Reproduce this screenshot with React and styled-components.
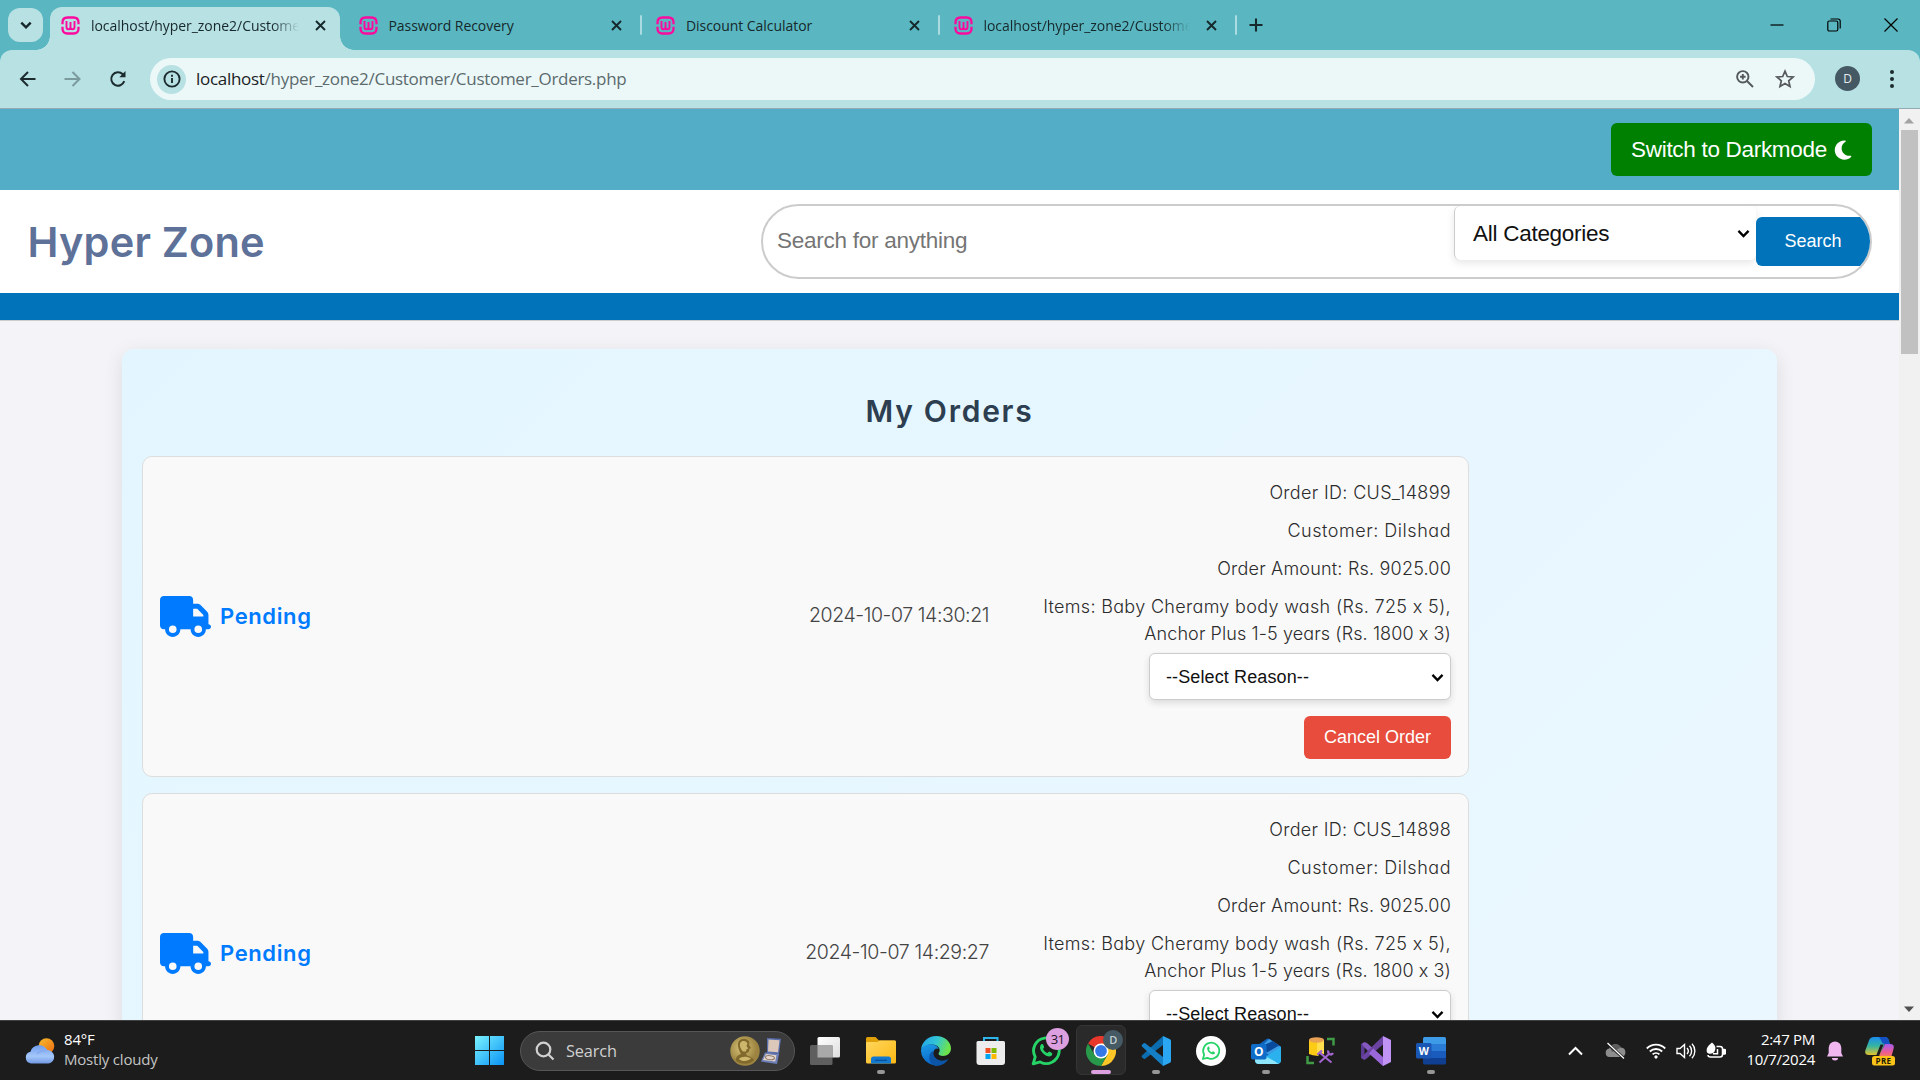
import React from "react";
import styled, { createGlobalStyle, css } from "styled-components";
import { FaMoon, FaTruck } from "react-icons/fa6";

const ui = `"Open Sans", "Noto Sans", sans-serif`;
const arial = `"Liberation Sans", Arial, sans-serif`;
const brand = `Inter, "Open Sans", sans-serif`;

const GlobalStyle = createGlobalStyle`
  *, *::before, *::after { box-sizing: border-box; }
  body { margin: 0; overflow: hidden; background: #f4f3f8; }
  svg { display: block; flex: none; }
  button { border: 0; background: none; padding: 0; font: inherit; color: inherit; display: flex; align-items: center; justify-content: center; flex: none; }
`;

const Screen = styled.div`
  width: 1920px;
  height: 1080px;
  display: flex;
  flex-direction: column;
  overflow: hidden;
`;

/* ---------- browser chrome ---------- */

const TabStrip = styled.div`
  height: 50px;
  flex: none;
  display: flex;
  align-items: stretch;
  background: #5ab7c1;
  color: #16282b;
  font-family: ${ui};
  font-size: 14px;
`;

const TabSearch = styled.button`
  width: 35px;
  height: 34px;
  margin: 8px 7px 0 8px;
  border-radius: 12px;
  background: #b8e1e4;
`;

const Tab = styled.div`
  display: flex;
  align-items: center;
  width: ${(p) => (p.$active ? 290 : 297.5)}px;
  flex: none;
  position: relative;
  padding: 0 ${(p) => (p.$active ? 14 : 18)}px 0 ${(p) => (p.$active ? 11 : 16)}px;
  ${(p) =>
    p.$active &&
    css`
      margin: 7px 2.5px 0 0;
      padding-bottom: 7px;
      background: #b8e1e4;
      border-radius: 12px 12px 0 0;
      &::before, &::after {
        content: "";
        position: absolute;
        bottom: 0;
        width: 14px;
        height: 14px;
      }
      &::before { left: -14px; background: radial-gradient(circle at 0 0, transparent 13.5px, #b8e1e4 14px); }
      &::after { right: -14px; background: radial-gradient(circle at 100% 0, transparent 13.5px, #b8e1e4 14px); }
    `}
  ${(p) =>
    p.$divided &&
    css`
      &::after {
        content: "";
        position: absolute;
        right: -2px;
        top: 15px;
        width: 2px;
        height: 20px;
        border-radius: 1px;
        background: #a9dbe0;
      }
    `}
`;

const TabTitle = styled.span`
  flex: 1;
  min-width: 0;
  margin: 0 16px 0 11px;
  overflow: hidden;
  white-space: nowrap;
  letter-spacing: -0.05px;
  ${(p) => p.$fade && css`mask-image: linear-gradient(90deg, #000 87%, transparent 100%);`}
`;

const NewTab = styled.button`
  width: 42px;
`;

const WindowControls = styled.div`
  display: flex;
  align-items: center;
  margin-left: auto;
  padding-right: 22px;
  gap: 43px;
`;

const ToolbarBack = styled.div`
  flex: none;
  background: #5ab7c1;
`;

const Toolbar = styled.div`
  height: 59px;
  display: flex;
  align-items: center;
  background: #b8e1e4;
  border-radius: 12px 12px 0 0;
  border-bottom: 1px solid #92aab0;
  color: #1c2b2e;
`;

const NavButtons = styled.div`
  display: flex;
  width: 150px;
  padding-left: 18px;
  gap: 25px;
`;

const Omnibox = styled.div`
  flex: none;
  width: 1665px;
  height: 42px;
  border-radius: 21px;
  background: #ecf8f8;
  display: flex;
  align-items: center;
  padding: 0 20px 0 7px;
`;

const SiteInfo = styled.div`
  width: 29px;
  height: 29px;
  border-radius: 50%;
  background: #b8e1e4;
  display: grid;
  place-items: center;
`;

const Url = styled.span`
  flex: 1;
  margin: -1px 0 0 10px;
  font-family: ${ui};
  font-size: 17px;
  letter-spacing: -0.29px;
  color: #5b6a6d;
  b { font-weight: 400; color: #1b2224; }
`;

const OmniActions = styled.div`
  display: flex;
  align-items: center;
  gap: 20px;
  color: #55595b;
`;

const Avatar = styled.div`
  width: 25px;
  height: 25px;
  flex: none;
  margin: -2px 30px 0 20px;
  border-radius: 50%;
  background: #455964;
  color: #e6edf0;
  font: 12px ${ui};
  display: grid;
  place-items: center;
`;

/* ---------- page ---------- */

const Viewport = styled.div`
  height: 911px;
  flex: none;
  display: flex;
  overflow: hidden;
`;

const Page = styled.main`
  width: 1899px;
  flex: none;
  overflow: hidden;
  background: #f4f3f8;
`;

const ScrollTrack = styled.div`
  width: 21px;
  flex: none;
  display: flex;
  flex-direction: column;
  align-items: center;
  background: #f1f1f1;
  padding: 9px 1px 8px 0;
`;

const ScrollThumb = styled.div`
  width: 17px;
  height: 224px;
  margin: 6px 0 auto;
  background: #c1c1c1;
`;

const TopBar = styled.div`
  height: 81px;
  display: flex;
  align-items: center;
  justify-content: flex-end;
  padding-right: 27px;
  background: #53adc6;
`;

const DarkModeButton = styled.button`
  width: 261px;
  height: 53px;
  padding-left: 2px;
  border-radius: 6px;
  background: #008000;
  color: #fff;
  font-family: ${arial};
  font-size: 22.5px;
  letter-spacing: -0.3px;
  gap: 5px;
`;

const Header = styled.header`
  height: 103px;
  display: flex;
  align-items: center;
  justify-content: space-between;
  padding: 0 27px 0 27.5px;
  background: #fff;
`;

const Logo = styled.h1`
  margin: 0;
  font-family: ${brand};
  font-feature-settings: "cv11", "calt" 0;
  font-size: 41.5px;
  font-weight: 600;
  letter-spacing: 0.2px;
  color: #5d7199;
`;

const SearchBar = styled.div`
  width: 1111px;
  height: 75px;
  display: flex;
  align-items: center;
  border: 2px solid #ccc;
  border-radius: 37.5px;
  overflow: hidden;
`;

const Placeholder = styled.span`
  flex: 1;
  padding: 0 0 2px 14px;
  font-family: ${arial};
  font-size: 22.5px;
  letter-spacing: -0.25px;
  color: #757575;
`;

const CategorySelect = styled.div`
  align-self: flex-start;
  width: 302px;
  height: 54px;
  display: flex;
  align-items: center;
  justify-content: space-between;
  padding: 1px 5px 0 18px;
  border-left: 1px solid #ccc;
  border-radius: 6px;
  box-shadow: 0 3px 8px rgba(0, 0, 0, 0.1);
  font-family: ${arial};
  font-size: 22.5px;
  letter-spacing: -0.27px;
  color: #111;
`;

const SearchButton = styled.button`
  width: 114px;
  height: 49px;
  border-radius: 6px 0 0 6px;
  background: #0073bb;
  color: #fff;
  font-family: ${arial};
  font-size: 18px;
`;

const NavBand = styled.div`
  height: 28px;
  background: #0073bb;
  border-bottom: 1px solid #ccc;
`;

const OrdersPanel = styled.section`
  width: 1655px;
  height: 2400px;
  margin: 28px 0 0 122px;
  padding: 39px 20px;
  border-radius: 12px;
  background: linear-gradient(135deg, #e3f6ff, #f0f8ff);
  box-shadow: 0 5px 19px rgba(0, 0, 0, 0.1);
`;

const PanelTitle = styled.h2`
  margin: 0 0 22px;
  line-height: 46px;
  text-align: center;
  font-family: ${brand};
  font-feature-settings: "cv11", "calt" 0;
  font-size: 30px;
  font-weight: 600;
  letter-spacing: 1.75px;
  color: #2c3e50;
`;

const OrderCard = styled.article`
  width: 1327px;
  height: 321px;
  margin-bottom: 16px;
  padding: 17px;
  display: flex;
  align-items: center;
  border: 1px solid #ddd;
  border-radius: 10px;
  background: #f9f9f9;
  font-family: ${brand};
  font-feature-settings: "cv11", "calt" 0;
`;

const Status = styled.div`
  display: flex;
  align-items: center;
  gap: 9px;
  padding-bottom: 1px;
  color: #007bff;
  font-size: 22px;
  font-weight: 600;
  letter-spacing: 0.62px;
`;

const OrderDate = styled.time`
  flex: 1;
  padding-bottom: 3px;
  text-align: right;
  font-size: 19.5px;
  font-weight: 300;
  letter-spacing: ${(p) => p.$tracking}px;
  color: #444;
`;

const Details = styled.div`
  width: 462px;
  padding-top: 4.5px;
  display: flex;
  flex-direction: column;
  align-items: flex-end;
`;

const DetailLine = styled.div`
  line-height: 27px;
  margin-bottom: ${(p) => (p.$tight ? 0 : p.$last ? 6.5 : 11)}px;
  font-size: 18px;
  font-weight: 350;
  letter-spacing: ${(p) => p.$tracking}px;
  color: #2c2c2c;
  white-space: nowrap;
`;

const ReasonSelect = styled.div`
  width: 302px;
  height: 47px;
  display: flex;
  align-items: center;
  justify-content: space-between;
  padding: 1px 5px 0 16px;
  border: 1px solid #ccc;
  border-radius: 6px;
  background: #fff;
  box-shadow: 0 3px 7px rgba(0, 0, 0, 0.12);
  font-family: ${arial};
  font-size: 18px;
  letter-spacing: 0.12px;
  color: #111;
`;

const CancelButton = styled.button`
  width: 147px;
  height: 43px;
  margin-top: 16px;
  border-radius: 6px;
  background: #e74c3c;
  color: #fff;
  font-family: ${arial};
  font-size: 18px;
`;

/* ---------- taskbar ---------- */

const Taskbar = styled.footer`
  height: 60px;
  flex: none;
  display: flex;
  align-items: center;
  background: #1c1c1c;
  border-top: 1px solid #414141;
  color: #fff;
  font-family: ${ui};
  font-size: 15px;
`;

const Weather = styled.div`
  display: flex;
  align-items: center;
  width: 459px;
  padding-left: 24px;
  gap: 8px;
`;

const WeatherText = styled.div`
  display: flex;
  flex-direction: column;
  padding-bottom: 4px;
  line-height: 20px;
  letter-spacing: -0.2px;
  span { color: #c4c4c4; }
`;

const TaskItem = styled.div`
  width: ${(p) => p.$width || 55}px;
  height: 59px;
  flex: none;
  display: grid;
  place-items: center;
  position: relative;
  &::after {
    content: "";
    display: ${(p) => (p.$running || p.$focused ? "block" : "none")};
    position: absolute;
    bottom: 6px;
    left: 50%;
    transform: translateX(-50%);
    width: ${(p) => (p.$focused ? 20 : 8)}px;
    height: 4px;
    border-radius: 2px;
    background: ${(p) => (p.$focused ? "#dc9fe0" : "#969696")};
  }
  ${(p) =>
    p.$focused &&
    css`
      &::before {
        content: "";
        position: absolute;
        inset: 4px 2.5px 5px;
        border-radius: 6px;
        background: #2a2a2a;
        border: 1px solid #353535;
      }
    `}
  svg { position: relative; }
`;

const Badge = styled.span`
  position: absolute;
  display: grid;
  place-items: center;
  top: ${(p) => (p.$profile ? 8.5 : 7)}px;
  right: ${(p) => (p.$profile ? 5 : 4)}px;
  width: ${(p) => (p.$profile ? 20 : 23)}px;
  height: ${(p) => (p.$profile ? 20 : 22)}px;
  border-radius: 50%;
  background: ${(p) => (p.$profile ? "#455a64" : "#dc9fe0")};
  color: ${(p) => (p.$profile ? "#c3ced3" : "#221525")};
  font-size: ${(p) => (p.$profile ? 11 : 13)}px;
  font-weight: ${(p) => (p.$profile ? 600 : 400)};
  letter-spacing: -0.7px;
`;

const TaskSearch = styled.div`
  width: 275px;
  height: 40px;
  margin: 0 1px;
  flex: none;
  display: flex;
  align-items: center;
  padding: 0 11px 0 14px;
  border: 1px solid #565656;
  border-radius: 20px;
  background: #3b3b3b;
  color: #d0d0d0;
  font-size: 16.3px;
  letter-spacing: -0.1px;
  span { flex: 1; margin-left: 11px; }
`;

const Tray = styled.div`
  margin-left: auto;
  display: flex;
  align-items: center;
  padding-right: 14px;
`;

const TrayIcons = styled.div`
  display: flex;
  align-items: center;
  gap: ${(p) => p.$gap}px;
  margin-left: ${(p) => p.$before || 0}px;
  margin-right: ${(p) => p.$after || 0}px;
`;

const Clock = styled.div`
  width: 80px;
  padding-bottom: 3px;
  margin: 0 12px 0 9px;
  line-height: 20px;
  text-align: right;
  letter-spacing: -0.28px;
`;

/* ---------- icons ---------- */

const Stroke = ({ w = 18, h = w, vb = "0 0 18 18", sw = 2, children, ...rest }) => (
  <svg width={w} height={h} viewBox={vb} fill="none" stroke="currentColor" strokeWidth={sw} {...rest}>
    {children}
  </svg>
);

const Chevron = ({ size = 14, color = "#000", sw = 2.2 }) => (
  <Stroke w={size} h={size} vb="0 0 14 14" sw={sw} color={color}>
    <path d="M2.3 4.6 7 9.3l4.7-4.7" />
  </Stroke>
);

const CloseIcon = () => (
  <Stroke w={11} vb="0 0 11 11" sw={1.9}>
    <path d="M1 1l9 9M10 1 1 10" />
  </Stroke>
);

const WampIcon = () => (
  <svg width="19" height="19" viewBox="0 0 19 19" fill="none" stroke="#fb0a9e">
    <path d="M1.500 8.200V6.500q0-5 5-5h6q5 0 5 5v1.700M1.500 10.800v1.700q0 5 5 5h6q5 0 5-5v-1.700" strokeWidth="2.300" />
    <path d="M5.500 5v6q0 2.300 2 2.300t2-2.300V6M9.500 11q0 2.300 2 2.300t2-2.300V5" strokeWidth="1.900" />
  </svg>
);

const WhatsGlyph = ({ size, color, sw }) => (
  <svg width={size} height={size} viewBox="0 0 30 30">
    <path d="M2.200 27.800l2-6.900A12.800 12.800 0 1 1 9.200 25.900z" fill="none" stroke={color} strokeWidth={sw} strokeLinejoin="round" />
    <path d="M10.300 8.300c.9-.7 1.500-.4 1.800.3l1 2.300c.2.600-.8 1.500-1.100 2 .9 1.900 2.500 3.400 4.600 4.200.6-.5 1.200-1.600 1.700-1.500l2.600 1.300c.8.400.3 2.300-.6 2.900-1.700 1.300-4.600.5-7.300-1.600-2.600-2-4.200-4.800-4-7 .1-1.100.5-2.200 1.300-2.900z" fill={color} />
  </svg>
);

const WeatherIcon = () => (
  <svg width="32" height="28" viewBox="0 0 32 28">
    <defs>
      <linearGradient id="sun" x1="0" y1="0" x2="1" y2="1"><stop offset="0" stopColor="#f7bd2d" /><stop offset="1" stopColor="#ee6a12" /></linearGradient>
      <linearGradient id="cloud" x1="0" y1="0" x2="0" y2="1"><stop offset="0" stopColor="#6f9cec" /><stop offset=".6" stopColor="#a5c8fb" /><stop offset="1" stopColor="#7299e4" /></linearGradient>
    </defs>
    <circle cx="22.500" cy="9" r="7.800" fill="url(#sun)" />
    <path d="M7 26.500a6 6 0 0 1-.5-11.800 9 9 0 0 1 16.600-1.700A6.800 6.800 0 0 1 24.500 26.500z" fill="url(#cloud)" />
    <path d="M13 17c2-3 6-3.500 10-3.800" stroke="#86abef" strokeWidth="1.500" fill="none" />
  </svg>
);

const WindowsIcon = () => (
  <svg width="29" height="29" viewBox="0 0 29 29">
    <defs><linearGradient id="win" x1="0" y1="0" x2="1" y2="1"><stop offset="0" stopColor="#7af2ff" /><stop offset="1" stopColor="#0a93f5" /></linearGradient></defs>
    <path d="M0 0h14v14H0zM15 0h14v14H15zM0 15h14v14H0zM15 15h14v14H15z" fill="url(#win)" />
  </svg>
);

const MedalIcon = () => (
  <svg width="54" height="32" viewBox="0 0 54 32">
    <defs><radialGradient id="medal" cx=".4" cy=".4"><stop offset="0" stopColor="#d9c47a" /><stop offset="1" stopColor="#9c8440" /></radialGradient></defs>
    <circle cx="16" cy="16" r="14.700" fill="url(#medal)" />
    <path d="M10 6c3-3.500 9-2.500 10.500 1.500l-.5 2.500 2 3-1.700 1c0 2.700-.8 4-3.300 4l1 2.500c3 1 6 2.500 7 4.500-4 5-14 5-18.500 0 .5-3.500 3-5 5.500-6-2-3.500-4.500-9.500-2-13z" fill="#80692c" />
    <path d="M11.500 7.500c2.500-2.500 6-1.500 7 1l-1 2.500 1.700 2.500-1.700.8-.5 2.200h-3c-2.500-2.500-4-6.500-2.500-9zM10 24c2-2.500 8-3 12-.5-3 3-9 3.500-12 .5z" fill="#cdb76d" />
    <path d="M38 3l14 .8-2 15.200-12-1z" fill="#5a6fae" />
    <path d="M39.500 4.500l11 .7-1.500 12-10-.8z" fill="#dcc8bb" />
    <path d="M36 17.500l14 1.500-2 10-16-2.500z" fill="#6d7fb8" />
    <path d="M37 19l10.500 1.200-1.300 6.300-12.200-1.500z" fill="#e5d6cb" />
    <ellipse cx="41" cy="22.700" rx="4.500" ry="2" fill="none" stroke="#8d7b6d" transform="rotate(6 41 22.700)" />
  </svg>
);

const TaskViewIcon = () => (
  <svg width="30" height="28" viewBox="0 0 30 28">
    <defs><linearGradient id="tv" x1="0" y1="0" x2="1" y2="1"><stop offset="0" stopColor="#fff" /><stop offset="1" stopColor="#dedede" /></linearGradient></defs>
    <rect x="7.500" y="0" width="22.500" height="20.500" rx="1.500" fill="url(#tv)" />
    <rect x="0" y="8" width="22.500" height="20" rx="1.500" fill="#5f5f5f" />
    <rect x="7.500" y="8" width="15" height="12.500" fill="#a9a9a9" />
  </svg>
);

const ExplorerIcon = () => (
  <svg width="30" height="27" viewBox="0 0 30 27">
    <defs><linearGradient id="fold" x1="0" y1="0" x2="1" y2="1"><stop offset="0" stopColor="#ffd75e" /><stop offset="1" stopColor="#fdb813" /></linearGradient></defs>
    <path d="M0 1.500Q0 0 1.500 0h8L13 3.500h15.500Q30 3.500 30 5v5H0z" fill="#e0a009" />
    <path d="M0 6q0-1 1.500-1h10L13.500 3.500H29q1 0 1 1.500v20q0 1.500-1.500 1.500h-27Q0 26.500 0 25z" fill="url(#fold)" />
    <path d="M5 26.500V22q0-2.500 2.500-2.500h15Q25 19.500 25 22v4.500z" fill="#1278d0" />
    <path d="M9 23.300h12" stroke="#0a4d94" strokeWidth="1.200" />
  </svg>
);

const EdgeIcon = () => (
  <svg width="30" height="30" viewBox="0 0 30 30">
    <defs>
      <linearGradient id="e1" x1="0" y1="0" x2="1" y2=".3"><stop offset="0" stopColor="#1f9ff0" /><stop offset=".55" stopColor="#33c6d4" /><stop offset="1" stopColor="#6ce34c" /></linearGradient>
      <linearGradient id="e2" x1="0" y1="0" x2=".3" y2="1"><stop offset="0" stopColor="#1c9de8" /><stop offset="1" stopColor="#0a66c8" /></linearGradient>
    </defs>
    <path d="M0 14A15 15 0 0 1 15 0c9 0 15 6 15 12.500 0 4.500-3.500 7.500-8 7.500-3.500 0-5-1.500-4.300-2.800C20 14 18 10 14 9 8 7.500 2 10 0 14z" fill="url(#e1)" />
    <path d="M0 14c2-4.500 7-6.500 12-5.500 3 .6 5 2.500 5.500 4.500-2-1.500-5 .2-5.300 4.200C12 23 17 27.500 22 27.500A15 15 0 0 1 0 15z" fill="url(#e2)" />
    <path d="M12.200 16.500c0 4.500 4 8.200 9 8.200 2.300 0 4.600-.8 6.400-2.200C25.500 27 20.500 30 15 30 10 29 7.500 24 8.500 19.500c.4-2 2-4 4.500-5-.5.600-.8 1.200-.8 2z" fill="#0c55a6" />
  </svg>
);

const StoreIcon = () => (
  <svg width="30" height="30" viewBox="0 0 30 30">
    <path d="M8 7V2h13.500v5" fill="none" stroke="#2db5ec" strokeWidth="2" />
    <path d="M.5 6.500Q.5 5 2 5h25.500Q29 5 29 6.500V26q0 3-3 3H3.500q-3 0-3-3z" fill="#ededed" />
    <path d="M9.500 12h5v5h-5z" fill="#f25022" /><path d="M15.500 12h5v5h-5z" fill="#7fba00" />
    <path d="M9.500 18h5v5h-5z" fill="#00a4ef" /><path d="M15.500 18h5v5h-5z" fill="#ffb900" />
  </svg>
);

const ChromeIcon = () => (
  <svg width="30" height="30" viewBox="0 0 30 30">
    <path d="M15 15 2 7.500A15 15 0 0 1 28 7.500z" fill="#e8382c" />
    <path d="M15 7.500h13A15 15 0 0 1 15 30l6.500-11.300z" fill="#fcc626" />
    <path d="M8.500 18.800 2 7.500A15 15 0 0 0 15 30l6.500-11.300z" fill="#28984a" />
    <circle cx="15" cy="15" r="7.500" fill="#fff" /><circle cx="15" cy="15" r="5.900" fill="#3478e8" />
  </svg>
);

const CodeIcon = () => (
  <svg width="30" height="30" viewBox="0 0 30 30">
    <path d="M22 0 1 19.500q-.8 1 0 1.800l1.700 1.500q.8.500 1.500 0L22 9z" fill="#0b6db0" />
    <path d="M22 30 1 10.500q-.8-1 0-1.800l1.700-1.500q.8-.5 1.500 0L22 21z" fill="#157fc6" />
    <path d="M22 0l7 3.300q1 .5 1 1.700v20q0 1.200-1 1.700L22 30z" fill="#2aa6f2" />
  </svg>
);

const WhatsRound = () => (
  <svg width="30" height="30" viewBox="0 0 30 30">
    <circle cx="15" cy="15" r="15" fill="#fff" />
    <g transform="translate(5.500 5.500) scale(.63)">
      <path d="M2.200 27.800l2-6.900A12.800 12.800 0 1 1 9.200 25.900z" fill="none" stroke="#25d366" strokeWidth="2.800" strokeLinejoin="round" />
      <path d="M10.300 8.300c.9-.7 1.500-.4 1.800.3l1 2.300c.2.600-.8 1.500-1.100 2 .9 1.900 2.500 3.400 4.600 4.200.6-.5 1.200-1.600 1.700-1.500l2.600 1.300c.8.400.3 2.300-.6 2.900-1.700 1.300-4.600.5-7.300-1.600-2.600-2-4.200-4.800-4-7 .1-1.100.5-2.200 1.300-2.900z" fill="#25d366" />
    </g>
  </svg>
);

const OutlookIcon = () => (
  <svg width="30" height="30" viewBox="0 0 30 30">
    <path d="M4 11 15.500 3q1.500-1 3 0L30 10.500V22H4z" fill="#1060b8" />
    <path d="M13 8l5-5q12 7.500 12 8.500L18 19l-6-4z" fill="#3a9be6" />
    <path d="M12 9.500 22 5l6 4.500-12 7z" fill="#0a4a9c" />
    <path d="M4 15.500 17 20l13-9v13q0 4-4 4H8q-4 0-4-4z" fill="#39c4f2" />
    <path d="M4 16l24 11q-1 1-3 1H8q-4 0-4-4z" fill="#8fe6fb" />
    <path d="M16 20l14-9v12q0 4-3 4.500z" fill="#2bb2ee" />
    <rect x="0" y="8" width="15.500" height="15.500" rx="1.800" fill="#0f6cc9" />
    <text x="7.750" y="20" textAnchor="middle" fontFamily="Open Sans, sans-serif" fontWeight="700" fontSize="12" fill="#fff">O</text>
  </svg>
);

const SqlIcon = () => (
  <svg width="29" height="30" viewBox="0 0 29 30">
    <path d="M21 3h6.500v6.500M1.500 20v7H8" fill="none" stroke="#3f9b45" strokeWidth="2.500" />
    <path d="M3 4h15v14q-7.500 3.500-15 0z" fill="#fbcb16" /><path d="M11 4h7v14q-3 1.500-7 1.700z" fill="#ffdf4d" />
    <ellipse cx="10.500" cy="4" rx="7.500" ry="2.700" fill="#e9a153" />
    <path d="M12.500 17l13 10M24 17l-9.500 9.500" stroke="#1c1c1c" strokeWidth="4" />
    <path d="M14 17l11.500 9.500M23 18l-9.500 8.500" stroke="#a166cf" strokeWidth="2" />
    <path d="M11.500 18.500l4.500-4M22.500 14.500a2.500 2.500 0 1 0 4.500 2.500" fill="none" stroke="#a166cf" strokeWidth="2.300" />
  </svg>
);

const StudioIcon = () => (
  <svg width="30" height="30" viewBox="0 0 30 30">
    <path d="M0 8l3.500-2v18L0 21.500z" fill="#5b3b91" />
    <path d="M1 8q2-3 5-1l17 15-1 8L3 11z" fill="#8558c0" />
    <path d="M0 21.500 22 0v8.500L5 23q-2 1.500-4-.5z" fill="#6b44a3" />
    <path d="M8 17.500 22 30v-8.500L12 12.500z" fill="#9a68d8" />
    <path d="M22 0l8 4v22l-8 4z" fill="#c193f5" />
  </svg>
);

const WordIcon = () => (
  <svg width="30" height="28" viewBox="0 0 30 28">
    <path d="M8.500 0h20Q30 0 30 1.500V7H7V1.500Q7 0 8.500 0z" fill="#3d9be8" />
    <path d="M7 7h23v7H7z" fill="#2a7bd6" /><path d="M7 14h23v7H7z" fill="#1a5cbe" />
    <path d="M7 21h23v5q0 1.500-1.500 1.500h-20Q7 27.500 7 26z" fill="#103f91" />
    <rect x="0" y="6" width="15.500" height="15.500" rx="1.500" fill="#1a56b4" />
    <text x="7.750" y="17.800" textAnchor="middle" fontFamily="Open Sans, sans-serif" fontWeight="700" fontSize="10.500" fill="#fff">W</text>
  </svg>
);

const CloudOff = () => (
  <svg width="21" height="18" viewBox="0 0 21 18">
    <path d="M4.500 15a4.300 4.300 0 0 1-.3-8.500A6.500 6.500 0 0 1 16 5.500a4.800 4.800 0 0 1 .5 9.500z" fill="#8d8d8d" />
    <path d="M5 5a6.500 6.500 0 0 1 11 .5L7 10z" fill="#5d5d5d" />
    <path d="M2.500 1.500 19 16.500" stroke="#1c1c1c" strokeWidth="3" /><path d="M2.500 1 19 16.500" stroke="#fff" strokeWidth="1.300" />
  </svg>
);

const CopilotIcon = () => (
  <svg width="30" height="30" viewBox="0 0 30 30">
    <defs>
      <linearGradient id="c1" x1="0" y1="0" x2="0" y2="1"><stop offset="0" stopColor="#1b8cf0" /><stop offset=".5" stopColor="#35b5a0" /><stop offset="1" stopColor="#e6c22c" /></linearGradient>
      <linearGradient id="c2" x1="0" y1="0" x2="0" y2="1"><stop offset="0" stopColor="#a45cf0" /><stop offset=".6" stopColor="#ee5c92" /><stop offset="1" stopColor="#f78a48" /></linearGradient>
    </defs>
    <path d="M9 1h11q3 0 4 4l.7 3h-5L15 19H4q-5 0-3.500-5L4 4.500Q5 1 9 1z" fill="url(#c1)" />
    <path d="M14 1h6q3 0 4 4l.7 3H20Q17 8 16 4z" fill="#1450c4" />
    <path d="M20 8h5q5 0 3.500 5L26 22H13z" fill="url(#c2)" />
    <path d="M15.500 8.500h3L14 20h-3z" fill="#1c1c1c" />
    <rect x="7" y="20" width="23" height="9.500" rx="2.500" fill="#fcc419" />
    <text x="18.500" y="27.800" textAnchor="middle" fontFamily="Open Sans, sans-serif" fontWeight="700" fontSize="8" letterSpacing=".4" fill="#201a05">PRE</text>
  </svg>
);

/* ---------- data ---------- */

const tabs = [
  { title: "localhost/hyper_zone2/Customer", active: true, fade: true },
  { title: "Password Recovery", divided: true },
  { title: "Discount Calculator", divided: true },
  { title: "localhost/hyper_zone2/Customer", divided: true, fade: true },
];

const orders = [
  { id: "CUS_14899", date: "2024-10-07 14:30:21", tracking: -0.41 },
  { id: "CUS_14898", date: "2024-10-07 14:29:27", tracking: -0.37 },
];

const Order = ({ id, date, tracking }) => (
  <OrderCard>
    <Status>
      <FaTruck size={51} />
      Pending
    </Status>
    <OrderDate $tracking={tracking}>{date}</OrderDate>
    <Details>
      <DetailLine $tracking={0.33}>Order ID: {id}</DetailLine>
      <DetailLine $tracking={0.53}>Customer: Dilshad</DetailLine>
      <DetailLine $tracking={0.2}>Order Amount: Rs. 9025.00</DetailLine>
      <DetailLine $tracking={0.32} $tight>Items: Baby Cheramy body wash (Rs. 725 x 5),</DetailLine>
      <DetailLine $tracking={0.1} $last>Anchor Plus 1-5 years (Rs. 1800 x 3)</DetailLine>
      <ReasonSelect>
        --Select Reason--
        <Chevron size={15} />
      </ReasonSelect>
      <CancelButton>Cancel Order</CancelButton>
    </Details>
  </OrderCard>
);

export default function App() {
  return (
    <Screen>
      <GlobalStyle />
      <TabStrip>
        <TabSearch><Chevron size={14} color="#16282b" sw={2.4} /></TabSearch>
        {tabs.map((t, i) => (
          <Tab key={i} $active={t.active} $divided={t.divided}>
            <WampIcon />
            <TabTitle $fade={t.fade}>{t.title}</TabTitle>
            <CloseIcon />
          </Tab>
        ))}
        <NewTab>
          <Stroke w={14} vb="0 0 14 14" sw={2.1}><path d="M7 .5v13M.5 7h13" /></Stroke>
        </NewTab>
        <WindowControls>
          <Stroke w={14} vb="0 0 14 14" sw={1.2} color="#000"><path d="M.5 7h13" /></Stroke>
          <Stroke w={14} vb="0 0 14 14" sw={1.2} color="#000">
            <rect x=".8" y="3" width="10" height="10" rx="1.500" />
            <path d="M3.500 1h7.500q2.200 0 2.200 2.200v7.300" />
          </Stroke>
          <Stroke w={14} vb="0 0 14 14" sw={1.2} color="#000"><path d="M.5.5l13 13M13.500.5l-13 13" /></Stroke>
        </WindowControls>
      </TabStrip>

      <ToolbarBack>
        <Toolbar>
          <NavButtons>
            <Stroke w={20} vb="0 0 20 20"><path d="M17.500 10H3M10 3l-7 7 7 7" /></Stroke>
            <Stroke w={20} vb="0 0 20 20" color="#7a9a9e"><path d="M1.500 10h15M9.500 3l7 7-7 7" /></Stroke>
            <Stroke w={20} vb="0 0 20 20">
              <path d="M16.300 12.200A6.700 6.700 0 1 1 14.800 5.300l1 1" />
              <path d="M17.500 2v6.200h-6.200z" fill="currentColor" stroke="none" />
            </Stroke>
          </NavButtons>
          <Omnibox>
            <SiteInfo>
              <Stroke w={18} sw={1.9}><circle cx="9" cy="9" r="7.600" /><path d="M9 8v5M9 4.800v1.900" /></Stroke>
            </SiteInfo>
            <Url><b>localhost</b>/hyper_zone2/Customer/Customer_Orders.php</Url>
            <OmniActions>
              <Stroke w={20} vb="0 0 20 20" sw={1.9}><circle cx="7.800" cy="7.800" r="5.700" /><path d="M12 12l6 6M7.800 5v5.600M5 7.800h5.600" /></Stroke>
              <Stroke w={20} vb="0 0 20 20" sw={1.7}><path d="M10 2.200l2.300 5.300 5.800.5-4.400 3.800 1.300 5.700-5-3-5 3 1.300-5.700L1.900 8l5.800-.5z" /></Stroke>
            </OmniActions>
          </Omnibox>
          <Avatar>D</Avatar>
          <svg width="4" height="20" viewBox="0 0 4 20" fill="currentColor">
            <circle cx="2" cy="3" r="2" /><circle cx="2" cy="10" r="2" /><circle cx="2" cy="17" r="2" />
          </svg>
        </Toolbar>
      </ToolbarBack>

      <Viewport>
        <Page>
          <TopBar>
            <DarkModeButton>Switch to Darkmode <FaMoon size={22} /></DarkModeButton>
          </TopBar>
          <Header>
            <Logo>Hyper Zone</Logo>
            <SearchBar>
              <Placeholder>Search for anything</Placeholder>
              <CategorySelect>
                All Categories
                <Chevron size={15} />
              </CategorySelect>
              <SearchButton>Search</SearchButton>
            </SearchBar>
          </Header>
          <NavBand />
          <OrdersPanel>
            <PanelTitle>My Orders</PanelTitle>
            {orders.map((o) => <Order key={o.id} {...o} />)}
          </OrdersPanel>
        </Page>
        <ScrollTrack>
          <svg width="10" height="6" viewBox="0 0 10 6"><path d="M5 0l5 5.500H0z" fill="#a3a3a3" /></svg>
          <ScrollThumb />
          <svg width="10" height="6" viewBox="0 0 10 6"><path d="M0 .5h10L5 6z" fill="#505050" /></svg>
        </ScrollTrack>
      </Viewport>

      <Taskbar>
        <Weather>
          <WeatherIcon />
          <WeatherText>84°F<span>Mostly cloudy</span></WeatherText>
        </Weather>
        <TaskItem $width={60}><WindowsIcon /></TaskItem>
        <TaskSearch>
          <Stroke w={20} vb="0 0 20 20" sw={2.2}><circle cx="8.500" cy="8.500" r="6.800" /><path d="M13.500 13.500l5 5" /></Stroke>
          <span>Search</span>
          <MedalIcon />
        </TaskSearch>
        <TaskItem $width={57}><TaskViewIcon /></TaskItem>
        <TaskItem $running><ExplorerIcon /></TaskItem>
        <TaskItem><EdgeIcon /></TaskItem>
        <TaskItem><StoreIcon /></TaskItem>
        <TaskItem><WhatsGlyph size={30} color="#25d366" sw={2.9} /><Badge>31</Badge></TaskItem>
        <TaskItem $focused><ChromeIcon /><Badge $profile>D</Badge></TaskItem>
        <TaskItem $running><CodeIcon /></TaskItem>
        <TaskItem><WhatsRound /></TaskItem>
        <TaskItem $running><OutlookIcon /></TaskItem>
        <TaskItem><SqlIcon /></TaskItem>
        <TaskItem><StudioIcon /></TaskItem>
        <TaskItem $running><WordIcon /></TaskItem>

        <Tray>
          <TrayIcons $gap={22} $after={20}>
            <Stroke w={15} h={10} vb="0 0 15 10" sw={2}><path d="M1 8.500 7.500 2 14 8.500" /></Stroke>
            <CloudOff />
          </TrayIcons>
          <TrayIcons $gap={10}>
            <Stroke w={20} h={18} vb="0 0 20 18" sw={1.8}>
              <path d="M.8 6.500a13 13 0 0 1 18.400 0M3.800 9.500a9 9 0 0 1 12.400 0M6.600 12.400a4.900 4.900 0 0 1 6.800 0" />
              <circle cx="10" cy="15" r="1.200" fill="currentColor" strokeWidth="1" />
            </Stroke>
            <Stroke w={20} h={18} vb="0 0 20 18" sw={1.4}>
              <path d="M1 6.500h3L8.500 2.500v13L4 11.500H1zM11 6a4.500 4.500 0 0 1 0 6M13.500 3.800a7.500 7.500 0 0 1 0 10.400M16 1.800a10.500 10.500 0 0 1 0 14.400" />
            </Stroke>
            <Stroke w={20} h={18} vb="0 0 20 18" sw={1.5}>
              <path d="M10.500 4.500H14q2.500 0 2.500 2.500v5.500q0 2.500-2.500 2.500H4.500Q2 15 2 13" />
              <path d="M17 7.500h1.500q1 0 1 1v2.500q0 1-1 1H17" fill="currentColor" />
              <path d="M6 .5c3 2.500 4.500 5 2.500 9-1.500 2.500-5.500 3-7.500 1C0 7 1 4.500 6 .5z" fill="currentColor" stroke="none" />
              <path d="M11.500 7v4.800H7" />
            </Stroke>
          </TrayIcons>
          <Clock>2:47 PM<br />10/7/2024</Clock>
          <svg width="16" height="20" viewBox="0 0 16 20" fill="#efb6ef">
            <path d="M8 .5a6.300 6.300 0 0 1 6.300 6.300V12l1.700 3.500H0L1.700 12V6.800A6.300 6.300 0 0 1 8 .5zM5 17h6a3 2.500 0 0 1-6 0z" />
          </svg>
          <TrayIcons $gap={0} $before={11}>
            <TaskItem $width={52}><CopilotIcon /></TaskItem>
          </TrayIcons>
        </Tray>
      </Taskbar>
    </Screen>
  );
}
